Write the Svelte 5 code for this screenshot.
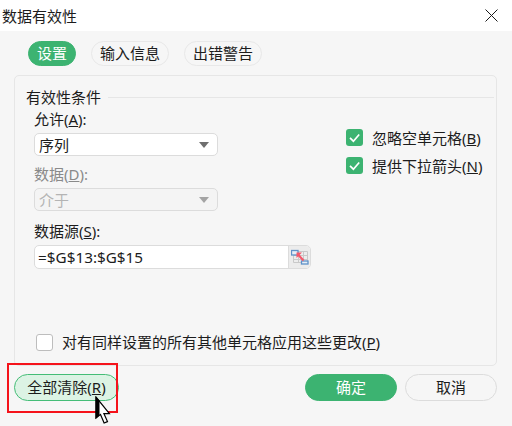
<script>
  const tabs = [
    { label: '设置', active: true },
    { label: '输入信息', active: false },
    { label: '出错警告', active: false }
  ];
</script>

<div class="dialog">
  <header class="titlebar">
    <span class="title">数据有效性</span>
    <svg class="close" width="13" height="13" viewBox="0 0 13 13"><path d="M.5.5l12 12M12.5.5l-12 12" stroke="#1a1a1a" stroke-width="1" fill="none"/></svg>
  </header>

  <div class="body">
    <nav class="tabs">
      {#each tabs as t}
        <span class="tab" class:active={t.active}>{t.label}</span>
      {/each}
    </nav>

    <section class="panel">
      <div class="legend"><span>有效性条件</span><i></i></div>
      <div class="columns">
        <div class="fields">
          <div class="label">允许(<u>A</u>):</div>
          <div class="select"><span>序列</span><b class="arrow"></b></div>
          <div class="label dim">数据(<u>D</u>):</div>
          <div class="select disabled"><span>介于</span><b class="arrow"></b></div>
          <div class="label">数据源(<u>S</u>):</div>
          <div class="input">
            <span>=$G$13:$G$15</span>
            <span class="picker">
              <svg width="18" height="18" viewBox="0 0 18 18">
                <path d="M2.500 3.500h14v11h-14zM2.500 7.500h14M2.500 11.500h14M7.500 3.500v11M12.500 3.500v11" stroke="#c9c9c9" fill="#ededed"/>
                <rect x="0.500" y="2.500" width="6.500" height="4.500" fill="#e6eef7" stroke="#5f92c9" stroke-width="1.300"/>
                <rect x="10.500" y="13" width="6.500" height="3" fill="#e6eef7" stroke="#5f92c9" stroke-width="1.300"/>
                <path d="M12.500 12.500L7 6.500" stroke="#f4596b" stroke-width="2.200" fill="none"/>
                <path d="M5.500 4.500h5.500l-5.500 5.500z" fill="#f4596b"/>
              </svg>
            </span>
          </div>
        </div>
        <div class="checks">
          <div class="check">
            <svg class="box" width="18" height="18" viewBox="0 0 18 18"><rect width="17" height="17" rx="3" fill="#3cb371"/><path d="M4 8.800l3.400 3.400L13.200 5.500" stroke="#fff" stroke-width="1.700" fill="none"/></svg>
            <span>忽略空单元格(<u>B</u>)</span>
          </div>
          <div class="check">
            <svg class="box" width="18" height="18" viewBox="0 0 18 18"><rect width="17" height="17" rx="3" fill="#3cb371"/><path d="M4 8.800l3.400 3.400L13.200 5.500" stroke="#fff" stroke-width="1.700" fill="none"/></svg>
            <span>提供下拉箭头(<u>N</u>)</span>
          </div>
        </div>
      </div>
      <div class="apply">
        <span class="empty"></span>
        <span>对有同样设置的所有其他单元格应用这些更改(<u>P</u>)</span>
      </div>
    </section>

    <footer class="actions">
      <button class="clear">全部清除(<u>R</u>)</button>
      <div class="right">
        <button class="ok">确定</button>
        <button class="cancel">取消</button>
      </div>
    </footer>
  </div>

  <div class="redbox"></div>
  <svg class="cursor" width="16" height="29" viewBox="0 0 16 29">
    <path d="M1 1v21l4.500-3.600 3.600 8.600 3.400-1.400-3.600-8h5.500z" fill="#fff" stroke="#000" stroke-width="1.200"/>
    <path d="M0.500 0.500v22.500l4-3.400V4.500z" fill="#000"/>
  </svg>
</div>

<style>
  :global(body) {
    margin: 0;
    background: #f6f6f6;
  }
  .dialog {
    position: relative;
    width: 512px;
    height: 426px;
    overflow: hidden;
    font-family: "Noto Sans", "Noto Sans CJK SC", sans-serif;
    font-size: 15px;
    line-height: 20px;
    color: #1c1c1c;
  }
  .titlebar {
    height: 31px;
    background: #fff;
    display: flex;
    align-items: center;
    justify-content: space-between;
    padding: 0 14px 0 2px;
  }
  .title {
    font-size: 15px;
  }
  .close {
    margin-bottom: 1px;
  }
  .body {
    height: 395px;
    background: #f6f6f6;
    padding: 10px 15px 0 14px;
    box-sizing: border-box;
  }
  .tabs {
    display: flex;
    gap: 15px;
    padding-left: 14px;
    height: 25px;
  }
  .tab {
    height: 25px;
    line-height: 23px;
    box-sizing: border-box;
    padding: 0 8px;
    border: 1px solid #e8e8e8;
    border-radius: 13px;
  }
  .tab.active {
    background: #3cb371;
    border-color: #3cb371;
    color: #fff;
  }
  .panel {
    margin-top: 9px;
    height: 291px;
    box-sizing: border-box;
    border: 1px solid #e6e6e6;
    border-radius: 5px;
    padding: 11px 2px 0 11px;
    display: flex;
    flex-direction: column;
  }
  .legend {
    display: flex;
    align-items: center;
    gap: 7px;
    height: 20px;
  }
  .legend i {
    flex: 1;
    height: 1px;
    background: #e6e6e6;
  }
  .columns {
    display: flex;
    padding-left: 8px;
    margin-top: 2px;
  }
  .fields {
    width: 312px;
  }
  .label {
    height: 20px;
    line-height: 20px;
  }
  .dim {
    color: #8a8a8a;
    margin-top: 8px;
  }
  .select {
    margin-top: 4px;
    width: 184px;
    height: 23px;
    box-sizing: border-box;
    background: #fff;
    border: 1px solid #dcdcdc;
    border-radius: 5px;
    display: flex;
    align-items: center;
    justify-content: space-between;
    padding: 0 8px 0 4px;
  }
  .select + .label:not(.dim) {
    margin-top: 10px;
  }
  .arrow {
    width: 0;
    height: 0;
    border-left: 5px solid transparent;
    border-right: 5px solid transparent;
    border-top: 6px solid #6f6f6f;
  }
  .disabled {
    background: #f4f4f4;
    border: 1px solid #dcdcdc;
    color: #b4b4b4;
  }
  .disabled .arrow {
    border-top-color: #a4a4a4;
  }
  .input {
    margin-top: 4px;
    width: 277px;
    height: 24px;
    box-sizing: border-box;
    background: #fff;
    border: 1px solid #dcdcdc;
    border-radius: 5px;
    display: flex;
    align-items: center;
    justify-content: space-between;
    padding-left: 3px;
    font-size: 15.300px;
  }
  .picker {
    width: 21px;
    height: 22px;
    background: #ececec;
    border-left: 1px solid #dcdcdc;
    border-radius: 0 4px 4px 0;
    display: flex;
    align-items: center;
    justify-content: center;
  }
  .checks {
    padding: 20px 0 0 0;
    display: flex;
    flex-direction: column;
    gap: 10px;
  }
  .check {
    display: flex;
    align-items: center;
    gap: 8px;
    height: 18px;
  }
  .apply {
    display: flex;
    align-items: center;
    gap: 9px;
    margin-top: auto;
    margin-bottom: 13px;
    padding-left: 10px;
  }
  .empty {
    width: 15px;
    height: 15px;
    background: #fff;
    border: 1px solid #bdbdbd;
    border-radius: 3px;
  }
  .actions {
    display: flex;
    justify-content: space-between;
    align-items: center;
    margin-top: 7px;
    height: 28px;
  }
  button {
    font: inherit;
    color: inherit;
    padding: 0;
    cursor: default;
  }
  .clear {
    width: 105px;
    height: 27px;
    background: #dcf3e4;
    border: 1px solid #45bd77;
    border-radius: 14px;
  }
  .right {
    display: flex;
    gap: 8px;
  }
  .ok, .cancel {
    width: 92px;
    height: 27px;
    border-radius: 14px;
  }
  .ok {
    background: #3cb371;
    border: 1px solid #3cb371;
    color: #fff;
  }
  .cancel {
    background: #f6f6f6;
    border: 1px solid #dcdcdc;
  }
  .redbox {
    position: absolute;
    left: 7px;
    top: 363px;
    width: 111px;
    height: 50px;
    box-sizing: border-box;
    border: 2px solid #f5131b;
  }
  .cursor {
    position: absolute;
    left: 95px;
    top: 396px;
  }
</style>
